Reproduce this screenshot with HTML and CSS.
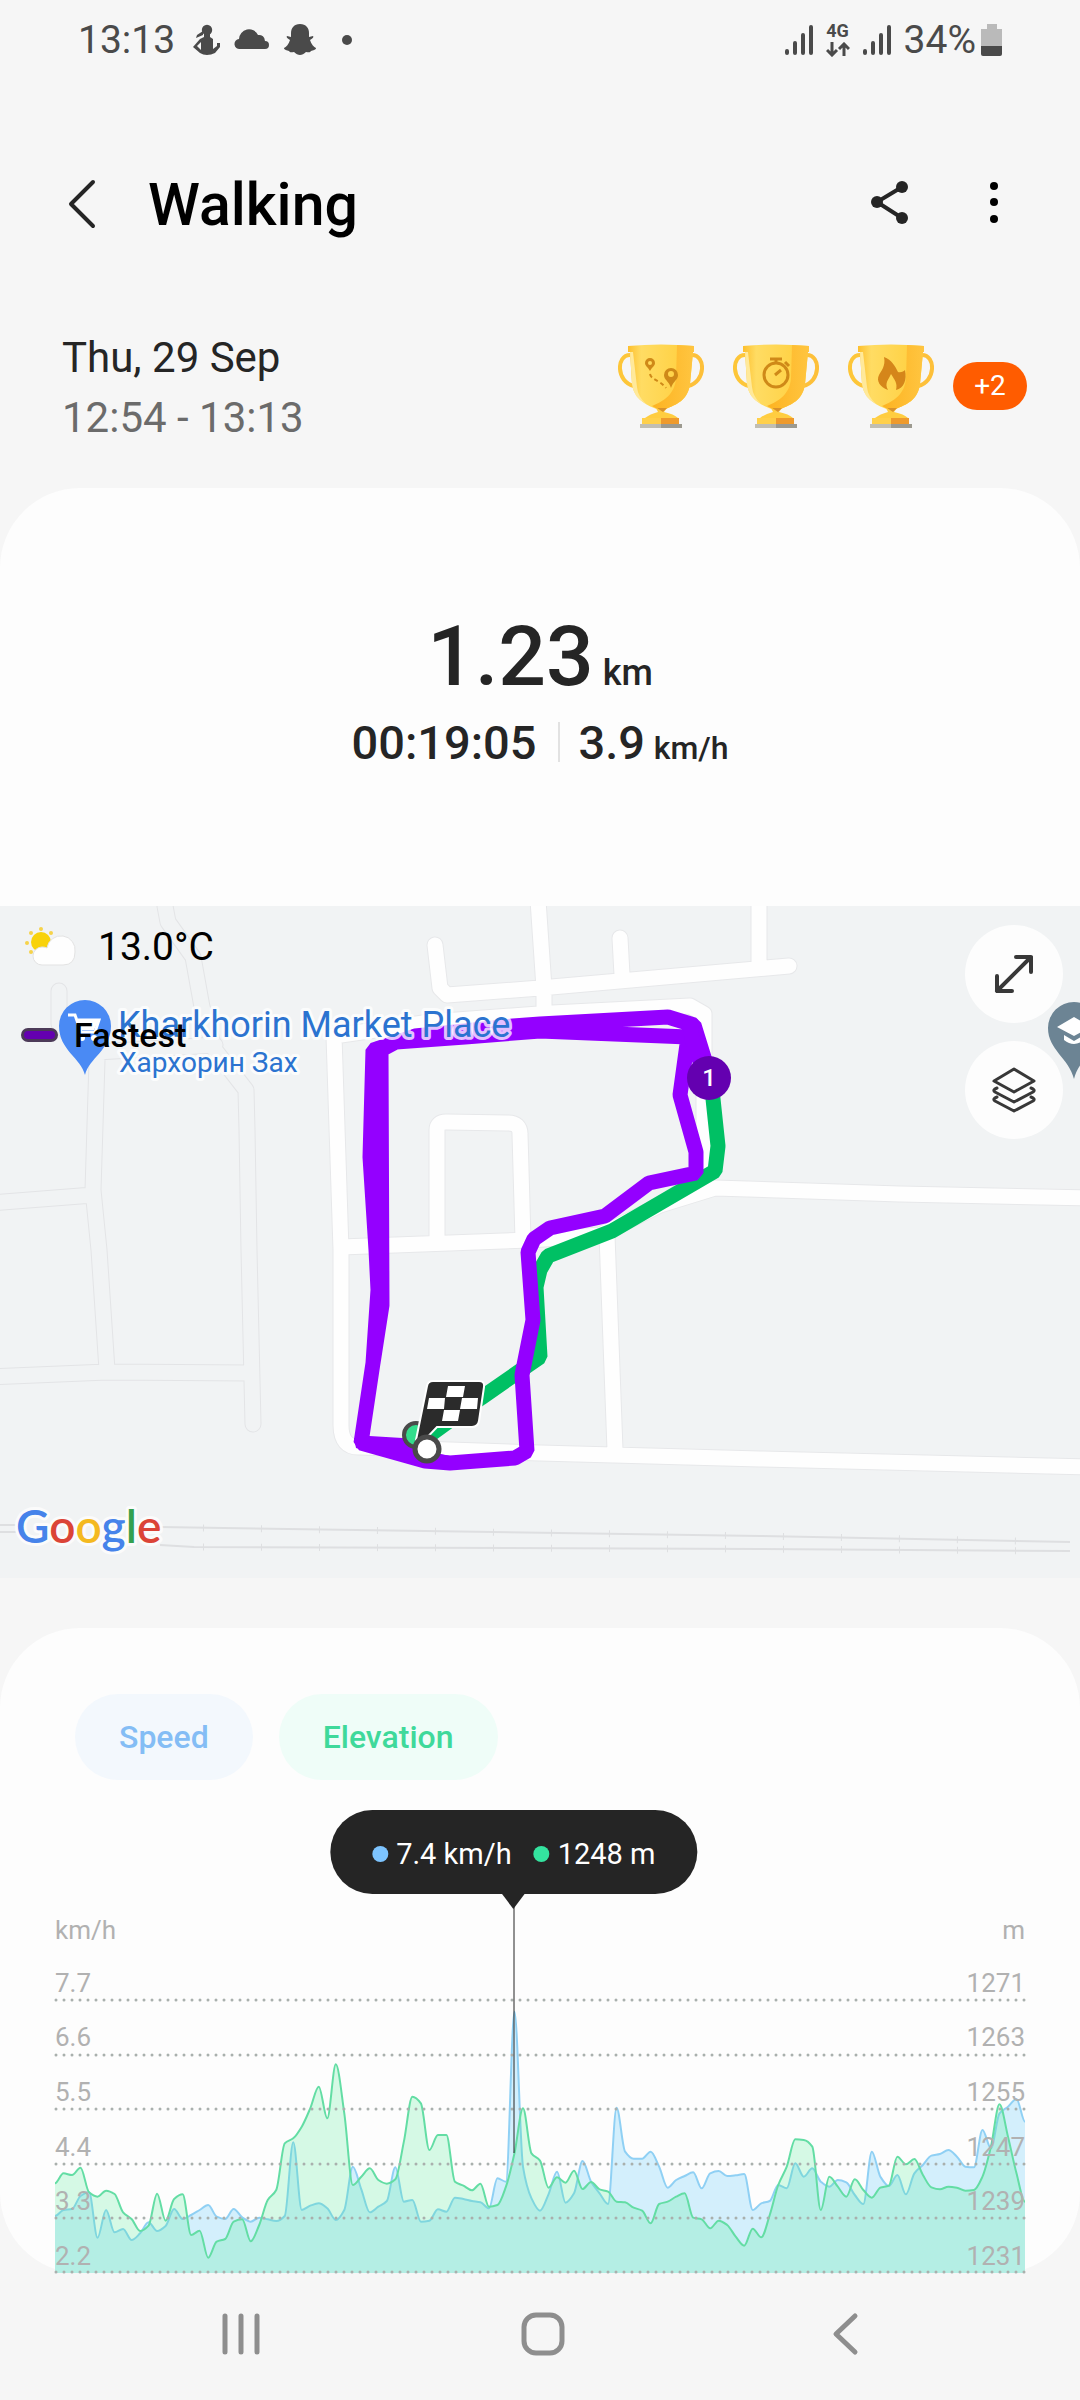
FILE: index.html
```html
<!DOCTYPE html>
<html lang="en">
<head>
  <meta charset="UTF-8" />
  <meta name="viewport" content="width=device-width, initial-scale=1.0"/>
  <title>Walking</title>
  <link rel="stylesheet" href="styles.css">
</head>
<body>
  <div class="status-bar">
    <div class="status-left">
      <span class="clock">13:13</span>
      <svg width="28" height="32" viewBox="0 0 28 32" fill="#4a4a4a">
        <circle cx="14" cy="6" r="5.2"/>
        <path d="M10 7L4 11L3 14L10 11Z"/>
        <path d="M11 10H17V13L20 15V25L24 22V19H27V23L22 29Q18 31 14 31T7 29L0 23L7 15L11 13ZM8 18L4 22L8 26Z" fill-rule="evenodd"/>
      </svg>
      <svg width="36" height="32" viewBox="0 0 36 32" fill="#4a4a4a">
        <path d="M6 25a5 5 0 0 1-1-10 10 10 0 0 1 19-4 6 6 0 0 1 7 6 4 4 0 0 1 0 8Z"/>
      </svg>
      <svg width="34" height="34" viewBox="0 0 34 34" fill="#4a4a4a">
        <path d="M17 1c6 0 9 4 9 9v4l4-1c1 1 0 2-3 4 1 4 4 7 6 8 0 2-3 2-5 3-1 2-3 1-5 1-2 2-4 3-6 3s-4-1-6-3c-2 0-4 1-5-1-2-1-5-1-5-3 2-1 5-4 6-8-3-2-4-3-3-4l4 1v-4c0-5 3-9 9-9Z"/>
      </svg>
      <span class="status-dot"></span>
    </div>
    <div class="status-right">
      <svg width="28" height="32" viewBox="0 0 28 32" stroke="#4a4a4a" stroke-width="4" stroke-linecap="round">
        <path d="M2 27V29M10 19V29M18 11V29M26 3V29"/>
      </svg>
      <span class="network">
        <b>4G</b>
        <svg width="24" height="15" viewBox="0 0 24 15" fill="none" stroke="#4a4a4a" stroke-width="3">
          <path d="M6 0V13M1 8L6 13L11 8M18 14V2M13 7L18 2L23 7"/>
        </svg>
      </span>
      <svg width="28" height="32" viewBox="0 0 28 32" stroke="#4a4a4a" stroke-width="4" stroke-linecap="round">
        <path d="M2 27V29M10 19V29M18 11V29M26 3V29"/>
      </svg>
      <span class="battery">34%
        <svg width="22" height="34" viewBox="0 0 22 34">
          <path d="M6 1h10v5h5v18H0V6h6Z" fill="#bababa"/>
          <path d="M0 23H21V31Q21 33 19 33H2Q0 33 0 31Z" fill="#4a4a4a"/>
        </svg>
      </span>
    </div>
  </div>

  <header class="app-header">
    <button class="icon-btn" aria-label="Back">
      <svg width="32" height="54" viewBox="0 2 32 54" fill="none" stroke="#252525" stroke-width="4" stroke-linecap="round" stroke-linejoin="round">
        <path d="M27 6L5 28L27 50"/>
      </svg>
    </button>
    <h1>Walking</h1>
    <button class="icon-btn" aria-label="Share">
      <svg width="44" height="48" viewBox="0 2 44 48" fill="#252525" stroke="#252525" stroke-width="4">
        <path d="M34 8L9 23L34 39" fill="none"/>
        <g stroke="none"><circle cx="34" cy="8" r="6"/><circle cx="9" cy="23" r="6"/><circle cx="34" cy="39" r="6"/></g>
      </svg>
    </button>
    <button class="icon-btn" aria-label="More options">
      <svg width="20" height="48" viewBox="0 2 20 48">
        <circle cx="10" cy="7" r="4"/><circle cx="10" cy="23" r="4"/><circle cx="10" cy="40" r="4"/>
      </svg>
    </button>
  </header>

  <!-- shared cup shape for the three rewards -->
  <svg width="0" height="0" class="defs">
    <defs>
      <linearGradient id="cupLight" x1="0" x2="1">
        <stop offset="0" stop-color="#fdbf2d"/><stop offset=".2" stop-color="#ffdc63"/><stop offset="1" stop-color="#ffce3a"/>
      </linearGradient>
      <linearGradient id="cupDark" x1="0" x2="1">
        <stop offset="0" stop-color="#fdb321"/><stop offset="1" stop-color="#ffc540"/>
      </linearGradient>
      <g id="cup">
        <path d="M12 11C-2 11-2 38 16 42" fill="none" stroke="#fdc639" stroke-width="4"/>
        <path d="M74 11C88 11 88 38 70 42" fill="none" stroke="#fdc03a" stroke-width="4"/>
        <path d="M10 2Q43-1 76 2V8H75L72 40C70 55 60 60 50 64L43 67L36 64C26 60 16 54 14 40L12 8H10Z" fill="url(#cupLight)"/>
        <path d="M59 1L76 2V8H75L72 40C70 55 60 60 50 64L43 67L34 62C46 57 57 50 58 34Z" fill="url(#cupDark)"/>
        <path d="M12 8L15 8L19 43Q20 53 28 60Q15 53 14 40Z" fill="#ffe99a"/>
        <path d="M38 64H49L46 68Q56 70 60 74H27Q32 70 40 68Z" fill="#ffcd40"/>
        <path d="M39 64H49L45 68Z" fill="#d9912a"/>
        <path d="M24 74H43V80H24Z" fill="#ffd04a"/><path d="M43 74H61V80H43Z" fill="#ee9a2c"/>
        <path d="M22 80H43V84H22Z" fill="#c1beb2"/><path d="M43 80H64V84H43Z" fill="#9c9a90"/>
      </g>
    </defs>
  </svg>

  <section class="summary">
    <div>
      <p class="date">Thu, 29 Sep</p>
      <p class="time">12:54 - 13:13</p>
    </div>
    <div class="rewards">
      <svg width="86" height="84" viewBox="0 0 86 84">
        <use href="#cup"/>
        <g fill="#cf8918">
          <path d="M32 27C30 23 27 22 27 19A5 5 0 0 1 37 19C37 22 34 23 32 27ZM32 17A2 2 0 1 0 32 21A2 2 0 1 0 32 17Z" fill-rule="evenodd"/>
          <path d="M53 44C51 37 46 36 46 31A7 7 0 0 1 60 31C60 36 55 37 53 44ZM53 27A3 3 0 1 0 53 33A3 3 0 1 0 53 27Z" fill-rule="evenodd"/>
        </g>
        <path d="M32 30C33 36 42 36 48 44" fill="none" stroke="#cf8918" stroke-width="2" stroke-dasharray="4 3"/>
      </svg>
      <svg width="86" height="84" viewBox="0 0 86 84">
        <use href="#cup"/>
        <g fill="none" stroke="#cf8918" stroke-width="3">
          <circle cx="43" cy="31" r="12"/><path d="M43 15V20M37 15H49M42 31L48 26M52 18L56 22"/>
        </g>
      </svg>
      <svg width="86" height="84" viewBox="0 0 86 84">
        <use href="#cup"/>
        <path d="M40 46C32 43 28 37 31 31C33 27 38 22 36 13C44 16 47 22 50 28C53 29 56 27 57 26C59 36 56 44 48 46C50 39 46 35 43 30C41 35 36 39 40 46Z" fill="#d5861a"/>
      </svg>
      <span class="more">+2</span>
    </div>
  </section>

  <section class="card totals">
    <p class="distance">1.23 <small>km</small></p>
    <p class="details"><span>00:19:05</span><span class="speed">3.9 <small>km/h</small></span></p>
  </section>

  <section class="map">
    <svg class="map-canvas" viewBox="0 906 1080 672" fill="none">
      <defs>
        <path id="minor" d="M165 900V906L168 922L193 957L202 1007L215 1050L246 1090L247 1130L249 1250L253 1424M59 991V1024L97 1060L93 1190L99 1250L107 1370M97 1052L215 1045M-10 1203L93 1195M-10 1377L107 1372L250 1373"/>
        <path id="major" d="M1090 1467L760 1459L540 1453L360 1447Q341 1448 341 1425V1250L334 1036L430 1022L552 1013L690 1006L704 1014V1175L660 1205L600 1235L530 1240L341 1247M1090 1198L900 1194L715 1188L660 1205M437 1240V1130Q437 1122 446 1122L508 1123Q520 1123 520 1134L523 1240M607 1235L615 1450M435 945L440 988L447 995L540 988L789 966M538 900L544 988V1015M620 938L622 975M759 900V966"/>
      </defs>
      <g stroke-linecap="round" stroke-linejoin="round">
        <use href="#minor" stroke="#e3e4e6" stroke-width="17"/>
        <use href="#minor" stroke="#f1f3f4" stroke-width="15"/>
        <use href="#major" stroke="#e7e8ea" stroke-width="17"/>
        <use href="#major" stroke="#fefefe" stroke-width="15"/>
      </g>

      <!-- railway -->
      <g stroke="#dedfe1">
        <path d="M0 1525H20M0 1532H20M160 1527L760 1536L1070 1542M160 1545L194 1547L760 1549L1070 1551" stroke-width="2"/>
        <path d="M203 1528L760 1536L1070 1542M203 1547L760 1549L1070 1551" stroke-width="7" stroke-dasharray="1 57"/>
      </g>

      <!-- recorded track -->
      <g stroke-width="15" stroke-linejoin="bevel">
        <path d="M711 1080L718 1146L715 1171L612 1231L548 1256L540 1270L536 1287L540 1357L481 1398L430 1435" stroke="#00c064"/>
        <g stroke="#9400ff">
          <path d="M711 1080L694 1025L668 1017L540 1024L513 1026L415 1036L373 1050L370 1157L376 1250L378 1290L373 1363L361 1443L425 1461L450 1463L515 1458L527 1451L522 1375L533 1320L528 1252L534 1239L550 1228L605 1216L649 1183L696 1173V1152L680 1095L688 1037L540 1031L465 1037L396 1042L381 1050L382 1305L373 1363L361 1443L410 1446"/>
          <path d="M690 1020L692 1040L705 1075"/>
        </g>
        <path d="M354 1438H410L432 1452L450 1456L425 1468L356 1448ZM375 1042L420 1029L500 1022V1040L380 1050Z" fill="#9400ff"/>
      </g>
      <circle cx="709" cy="1078" r="22" fill="#6400b0"/>
      <text x="709" y="1086" class="marker-no" text-anchor="middle">1</text>

      <!-- start and finish -->
      <circle cx="416" cy="1435" r="12" fill="#33dd8c" stroke="#4a4a4a" stroke-width="4"/>
      <path d="M433 1381H479Q485 1381 484 1387L479 1421Q478 1427 472 1427H437L420 1445L416 1440L427 1386Q428 1381 433 1381Z" fill="#2b2b2b" stroke="#fff" stroke-width="2"/>
      <path d="M448 1386H465L463 1397H446ZM429 1398H445L444 1409H427ZM462 1398H478L477 1409H460ZM444 1410H460L458 1421H442Z" fill="#fff"/>
      <circle cx="427" cy="1449" r="12" fill="#fff" stroke="#4a4a4a" stroke-width="5"/>

      <!-- places -->
      <path d="M85 1075C81 1058 59 1050 59 1026A26 26 0 0 1 111 1026C111 1050 89 1058 85 1075Z" fill="#4a8af4"/>
      <path d="M68 1015H75L81 1032H95L99 1020H78" stroke="#fff" stroke-width="3"/><path d="M77 1019H99L94 1030H81Z" fill="#fff"/>
      <circle cx="82" cy="1038" r="3" fill="#fff"/><circle cx="94" cy="1038" r="3" fill="#fff"/>
      <path d="M1074 1079C1069 1058 1048 1050 1048 1028A26 26 0 0 1 1100 1028C1100 1050 1079 1058 1074 1079Z" fill="#6c8494"/>
      <path d="M1057 1027L1074 1017L1091 1027L1074 1036ZM1064 1035L1074 1041L1084 1035V1040Q1074 1048 1064 1040Z" fill="#fff"/>
      <text x="118" y="1037" class="place">Kharkhorin Market Place</text>
      <text x="119" y="1072" class="place place-local">Хархорин Зах</text>
      <text x="16" y="1543" class="google"><tspan fill="#4683ea">G</tspan><tspan fill="#db4437">o</tspan><tspan fill="#f4b920">o</tspan><tspan fill="#4683ea">g</tspan><tspan fill="#34a04f">l</tspan><tspan fill="#db4437">e</tspan></text>
    </svg>

    <div class="weather">
      <svg width="52" height="42" viewBox="0 0 52 42">
        <g fill="#f6d34a"><circle cx="17" cy="3" r="2"/><circle cx="7" cy="7" r="2"/><circle cx="27" cy="7" r="2"/><circle cx="3" cy="17" r="2"/><circle cx="7" cy="26" r="2"/></g>
        <circle cx="17" cy="16" r="10" fill="#f8d20c"/>
        <path d="M18 39A9 9 0 0 1 18 21Q21 21 23 22A14 14 0 0 1 51 26Q51 39 39 39Z" fill="#fefefe" stroke="#e3e3e3"/>
      </svg>
      <span>13.0°C</span>
    </div>
    <div class="legend"><span class="swatch"></span>Fastest</div>

    <div class="map-tools">
      <button class="round-btn" aria-label="Expand map">
        <svg width="48" height="48" viewBox="0 0 48 48" fill="none" stroke="#383838" stroke-width="4" stroke-linecap="round" stroke-linejoin="round">
          <path d="M7 41L41 7M26 7H41V22M7 26V41H22"/>
        </svg>
      </button>
      <button class="round-btn" aria-label="Map layers">
        <svg width="48" height="48" viewBox="0 0 48 48" fill="none" stroke="#383838" stroke-width="3" stroke-linecap="round" stroke-linejoin="round">
          <path d="M24 3L44 15L24 26L4 15ZM7 22Q2 24 5 26L24 36L43 26Q46 24 41 22M7 31Q2 33 5 35L24 45L43 35Q46 33 41 31"/>
        </svg>
      </button>
    </div>
  </section>

  <section class="card chart-card">
    <div class="chips">
      <button class="chip chip-speed">Speed</button>
      <button class="chip chip-elevation">Elevation</button>
    </div>
    <div class="chart">
      <div class="tooltip"><i class="dot-speed"></i>7.4 km/h<i class="dot-elevation"></i>1248 m</div>
      <div class="units"><span>km/h</span><span>m</span></div>
      <div class="plot">
        <svg viewBox="0 0 970 328" fill="none" stroke-width="2">
          <path id="speedArea" fill="#d3effc"/>
          <path id="speedLine" stroke="#8fd0f4"/>
          <path id="elevationArea" fill="#47eb90" fill-opacity=".22"/>
          <path id="elevationLine" stroke="#63dda4"/>
          <path d="M1 55H970M1 110H970M1 164H970M1 219H970M1 273H970M1 327H970" stroke="#a9b0ad" stroke-width="3" stroke-linecap="round" stroke-dasharray="0 8"/>
          <path d="M459 -40V208" stroke="#252525" stroke-width="1"/>
        </svg>
        <div class="scale">
          <div><span>7.7</span><span>1271</span></div>
          <div><span>6.6</span><span>1263</span></div>
          <div><span>5.5</span><span>1255</span></div>
          <div><span>4.4</span><span>1247</span></div>
          <div><span>3.3</span><span>1239</span></div>
          <div><span>2.2</span><span>1231</span></div>
        </div>
      </div>
    </div>
  </section>

  <nav class="nav-bar">
    <button class="icon-btn" aria-label="Recent apps">
      <svg width="44" height="44" viewBox="0 0 44 44" stroke="#8e8e8e" stroke-width="5" stroke-linecap="round"><path d="M6 4V40M22 4V40M38 4V40"/></svg>
    </button>
    <button class="icon-btn" aria-label="Home">
      <svg width="44" height="44" viewBox="0 0 44 44" fill="none" stroke="#8e8e8e" stroke-width="5"><rect x="3" y="3" width="38" height="38" rx="12"/></svg>
    </button>
    <button class="icon-btn" aria-label="Back">
      <svg width="44" height="44" viewBox="0 0 44 44" fill="none" stroke="#8e8e8e" stroke-width="5" stroke-linecap="round" stroke-linejoin="round"><path d="M32 4L13 22L32 40"/></svg>
    </button>
  </nav>

  <script src="chart.js"></script>
</body>
</html>
```
FILE: styles.css
```css
* {
  box-sizing: border-box;
}

body {
  margin: 0;
  font-family: Roboto, "Liberation Sans", sans-serif;
  background: #f6f6f6;
  color: #252525;
}

p, h1 {
  margin: 0;
}

button {
  border: none;
  padding: 0;
  font-family: inherit;
  cursor: pointer;
}

svg {
  display: block;
}

small {
  line-height: 1;
}

.defs {
  position: absolute;
}

/* status bar */
.status-bar {
  display: flex;
  justify-content: space-between;
  align-items: center;
  height: 80px;
  padding: 0 77px 0 78px;
  color: #4a4a4a;
  font-size: 39px;
}

.status-left, .status-right {
  display: flex;
  align-items: center;
  gap: 13px;
}

.clock {
  margin-right: 5px;
}

.status-dot {
  width: 10px;
  height: 10px;
  margin-left: 12px;
  border-radius: 50%;
  background: #4a4a4a;
}

.network {
  display: flex;
  flex-direction: column;
  align-items: center;
  gap: 4px;
  font-size: 18px;
  line-height: 14px;
}

.battery {
  display: flex;
  align-items: center;
  gap: 5px;
}

/* header */
.app-header {
  display: flex;
  align-items: center;
  padding: 90px 76px 88px 66px;
}

.app-header h1 {
  flex: 1;
  margin-left: 50px;
  font-size: 59px;
  font-weight: 500;
  line-height: 70px;
  color: #000;
}

.icon-btn {
  background: none;
}

.app-header .icon-btn + .icon-btn {
  margin-left: 72px;
}

/* date and rewards */
.summary {
  display: flex;
  justify-content: space-between;
  padding: 0 53px 40px 62px;
  font-size: 42px;
  line-height: 60px;
}

.time {
  color: #6b6b6b;
}

.rewards {
  display: flex;
  align-items: center;
  align-self: flex-start;
  gap: 29px;
  padding-top: 16px;
}

.more {
  width: 74px;
  margin-left: -10px;
  border-radius: 24px;
  background: #ff5c00;
  color: #fff;
  font-size: 28px;
  line-height: 48px;
  text-align: center;
}

.card {
  background: #fdfdfd;
}

/* totals */
.totals {
  padding: 119px 24px 135px;
  border-radius: 80px 80px 0 0;
  text-align: center;
  font-weight: 500;
}

.distance {
  font-size: 84px;
  line-height: 100px;
}

.distance small {
  margin-left: -12px;
  font-size: 36px;
}

.details {
  display: flex;
  justify-content: center;
  margin-top: 8px;
  font-size: 47px;
  line-height: 56px;
}

.speed {
  margin-left: 21px;
  padding-left: 21px;
  background: linear-gradient(#e2e2e2, #e2e2e2) 0 7px / 2px 40px no-repeat;
}

.speed small {
  margin-left: -3px;
  font-size: 32px;
}

/* map */
.map {
  position: relative;
  padding-bottom: 50px;
}

.map-canvas {
  width: 100%;
  height: auto;
  background: #f1f3f4;
}

.marker-no {
  font-size: 24px;
  font-weight: 500;
  fill: #fff;
}

.place {
  font-size: 36px;
  fill: #2b73d0;
  stroke: rgba(255, 255, 255, .75);
  stroke-width: 6px;
  stroke-linejoin: round;
  paint-order: stroke;
}

.place-local {
  font-size: 28px;
}

.google {
  font-family: Lato, "Liberation Sans", sans-serif;
  font-size: 46px;
  font-weight: 600;
  stroke: #fbfbfb;
  stroke-width: 6px;
  stroke-linejoin: round;
  paint-order: stroke;
}

.weather {
  position: absolute;
  top: 18px;
  left: 24px;
  display: flex;
  align-items: center;
  gap: 22px;
  color: #000;
  font-size: 39px;
  line-height: 46px;
}

.legend {
  position: absolute;
  top: 109px;
  left: 21px;
  display: flex;
  align-items: center;
  gap: 16px;
  color: #000;
  font-size: 34px;
  font-weight: 500;
  line-height: 40px;
}

.swatch {
  width: 37px;
  height: 14px;
  border: 3px solid #4c3a58;
  border-radius: 7px;
  background: #6400b0;
}

.map-tools {
  position: absolute;
  top: 19px;
  right: 17px;
  display: flex;
  flex-direction: column;
  gap: 18px;
}

.round-btn {
  display: grid;
  place-items: center;
  width: 98px;
  height: 98px;
  border-radius: 50%;
  background: #fdfdfd;
}

/* speed and elevation chart */
.chart-card {
  padding: 66px 55px 0;
  border-radius: 80px;
}

.chips {
  display: flex;
  gap: 26px;
  padding-left: 20px;
}

.chip {
  height: 86px;
  padding: 0 44px;
  border-radius: 43px;
  font-size: 32px;
  font-weight: 500;
}

.chip-speed {
  background: #f3f8fd;
  color: #84bdf5;
}

.chip-elevation {
  background: #effdf8;
  color: #3fd99b;
}

.chart {
  position: relative;
  padding-top: 135px;
  color: #b1b1b1;
  font-size: 26px;
}

.tooltip {
  position: absolute;
  top: 30px;
  left: 47.3%;
  display: flex;
  align-items: center;
  height: 84px;
  padding: 4px 42px 0;
  border-radius: 42px;
  background: #252525;
  color: #fff;
  font-size: 29px;
  white-space: nowrap;
  transform: translateX(-50%);
}

.tooltip::after {
  content: "";
  position: absolute;
  top: 83px;
  left: 50%;
  border: 12px solid transparent;
  border-top: 16px solid #252525;
  border-bottom: none;
  transform: translateX(-50%);
}

.tooltip i {
  width: 16px;
  height: 16px;
  margin-right: 8px;
  border-radius: 50%;
}

.dot-speed {
  background: #7dc4ff;
}

.tooltip .dot-elevation {
  margin-left: 22px;
  background: #34e39f;
}

.units {
  display: flex;
  justify-content: space-between;
  line-height: 30px;
}

.plot {
  position: relative;
}

.plot svg {
  width: 100%;
  height: auto;
  overflow: visible;
}

.scale {
  position: absolute;
  inset: 0;
  display: flex;
  flex-direction: column;
}

.scale div {
  flex: 1;
  display: flex;
  justify-content: space-between;
  align-items: flex-end;
  line-height: 34px;
}

/* system navigation */
.nav-bar {
  display: grid;
  grid-template-columns: repeat(3, 1fr);
  justify-items: center;
  padding: 39px 84px 44px 90px;
}
```
FILE: chart.js
```js
// depth of each reading below the top of the plot, three steps to a unit
const speed = [
  708, 690, 687, 648, 637, 773, 690, 757, 747, 780, 760, 727, 753, 738, 687, 717, 705, 690, 675, 710,
  717, 687, 712, 725, 713, 718, 723, 708, 487, 690, 677, 670, 685, 720, 690, 560, 628, 697, 680, 663,
  562, 665, 660, 725, 722, 688, 695, 653, 657, 663, 667, 685, 595, 605, 95, 560, 655, 692, 643, 575,
  668, 640, 543, 605, 640, 672, 383, 515, 536, 536, 515, 560, 623, 600, 588, 577, 625, 580, 573, 588,
  586, 582, 690, 670, 663, 615, 625, 550, 590, 565, 605, 620, 600, 607, 645, 672, 515, 590, 618, 585,
  643, 580, 555, 527, 522, 510, 530, 560, 562, 450, 505, 400, 380, 357, 425
];
const elevation = [
  610, 580, 585, 563, 637, 650, 632, 642, 697, 717, 753, 737, 641, 722, 657, 643, 765, 752, 833, 785,
  777, 725, 718, 784, 735, 660, 630, 490, 475, 440, 385, 320, 415, 253, 400, 615, 590, 565, 600, 611,
  598, 485, 350, 370, 510, 465, 465, 605, 617, 631, 611, 680, 675, 620, 520, 385, 520, 542, 623, 592,
  608, 572, 627, 606, 628, 635, 665, 667, 683, 692, 730, 672, 665, 650, 640, 713, 718, 745, 722, 735,
  770, 797, 746, 772, 705, 615, 560, 478, 480, 500, 690, 590, 620, 650, 598, 630, 653, 623, 617, 530,
  553, 537, 585, 622, 628, 620, 623, 632, 630, 590, 500, 373, 470, 580, 665
];

const WIDTH = 970;
const BASE = 328;

function linePath(values) {
  const step = WIDTH / (values.length - 1);
  const ys = values.map(v => v / 3 + 35);
  // flat at peaks and dips, sloped in between
  const slope = ys.map((y, i) => {
    const before = y - ys[i - 1];
    const after = ys[i + 1] - y;
    if (!(before * after > 0)) return 0;
    return 2 * before * after / (before + after);
  });
  let d = `M0 ${ys[0]}`;
  for (let i = 1; i < ys.length; i++) {
    const x0 = (i - 1) * step;
    const x1 = i * step;
    d += `C${x0 + step / 3} ${ys[i - 1] + slope[i - 1] / 3} ${x1 - step / 3} ${ys[i] - slope[i] / 3} ${x1} ${ys[i]}`;
  }
  return d;
}

function draw(name, values) {
  const d = linePath(values);
  document.getElementById(name + 'Line').setAttribute('d', d);
  document.getElementById(name + 'Area').setAttribute('d', `${d}V${BASE}H0Z`);
}

draw('speed', speed);
draw('elevation', elevation);
```
